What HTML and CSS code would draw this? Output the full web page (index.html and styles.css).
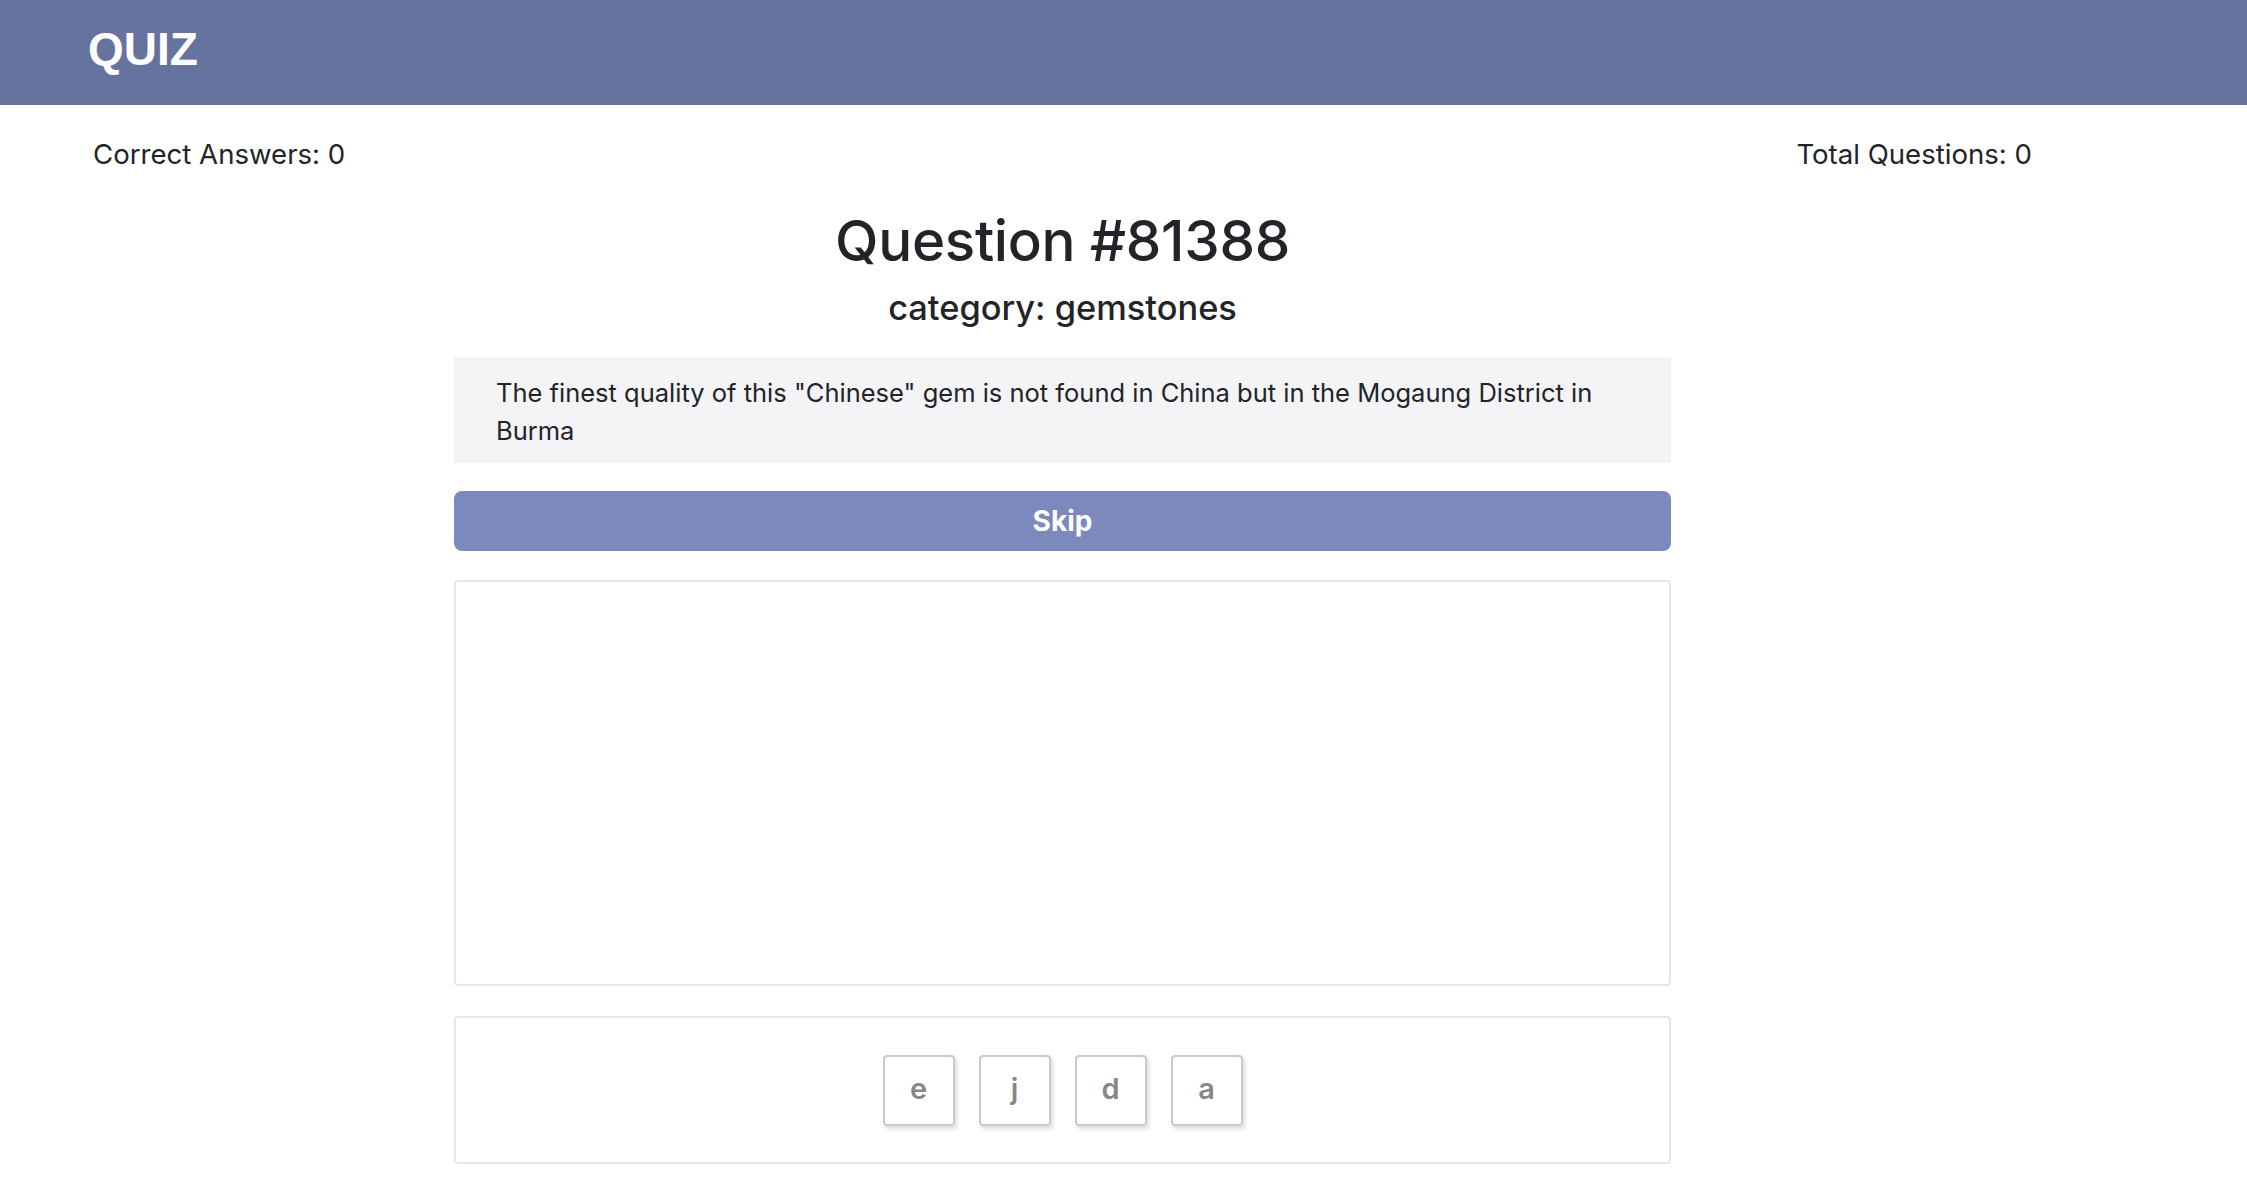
FILE: index.html
```html
<!DOCTYPE html>
<html lang="en">
<head>
<meta charset="utf-8">
<title>Quiz</title>
<link rel="stylesheet" href="styles.css">
</head>
<body>
<header class="topbar">
  <span class="brand">QUIZ</span>
</header>
<div class="stats">
  <span class="stat">Correct Answers: 0</span>
  <span class="stat">Total Questions: 0</span>
</div>
<main class="main">
  <h1 class="title">Question #81388</h1>
  <h4 class="category">category: gemstones</h4>
  <div class="question">The finest quality of this "Chinese" gem is not found in China but in the Mogaung District in Burma</div>
  <button class="skip">Skip</button>
  <div class="answer"></div>
  <div class="letters">
    <div class="tile">e</div>
    <div class="tile">j</div>
    <div class="tile">d</div>
    <div class="tile">a</div>
  </div>
</main>
</body>
</html>
```
FILE: styles.css
```css
html, body {
  margin: 0;
  padding: 0;
  background: #ffffff;
}
body {
  font-family: Inter, "Noto Sans", "Liberation Sans", sans-serif;
  color: #212529;
}
.topbar {
  height: 105px;
  background: #67739f;
  display: flex;
  align-items: center;
  padding-left: 88px;
  box-sizing: border-box;
  padding-bottom: 8px;
}
.brand {
  font-family: "Liberation Sans", Arial, sans-serif;
  font-weight: 700;
  font-size: 46px;
  color: #ffffff;
  line-height: 1;
}
.stats {
  display: flex;
  justify-content: space-between;
  padding: 0 215px 0 93px;
  margin-top: 29px;
}
.stat {
  font-size: 27.6px;
  line-height: 40px;
  font-weight: 400;
}
.main {
  width: 1217px;
  margin-left: 454px;
  display: flex;
  flex-direction: column;
}
.title {
  margin: 33px 0 0;
  text-align: center;
  font-size: 56.5px;
  line-height: 68px;
  font-weight: 500;
  letter-spacing: -0.3px;
}
.category {
  margin: 12px 0 0;
  text-align: center;
  font-size: 34.4px;
  line-height: 41px;
  font-weight: 500;
}
.question {
  margin-top: 29px;
  background: #f4f4f6;
  padding: 17px 42px 14px;
  font-size: 25.5px;
  line-height: 37.5px;
}
.skip {
  margin-top: 28px;
  height: 60px;
  border: none;
  border-radius: 8px;
  background: #7b89bd;
  color: #ffffff;
  font-family: Inter, "Liberation Sans", sans-serif;
  font-weight: 700;
  font-size: 28px;
  padding: 0;
}
.answer {
  margin-top: 29px;
  height: 406px;
  box-sizing: border-box;
  border: 2px solid #e6e6e6;
  border-radius: 4px;
}
.letters {
  margin-top: 30px;
  height: 148px;
  box-sizing: border-box;
  border: 2px solid #e6e6e6;
  border-radius: 4px;
  display: flex;
  justify-content: center;
  align-items: center;
  gap: 24px;
}
.tile {
  width: 72px;
  height: 71px;
  box-sizing: border-box;
  border: 2px solid #cacaca;
  border-radius: 4px;
  box-shadow: 2px 3px 4px rgba(0, 0, 0, 0.14);
  display: flex;
  align-items: center;
  justify-content: center;
  font-size: 29px;
  font-weight: 600;
  color: #878787;
  padding-bottom: 4px;
}
```
